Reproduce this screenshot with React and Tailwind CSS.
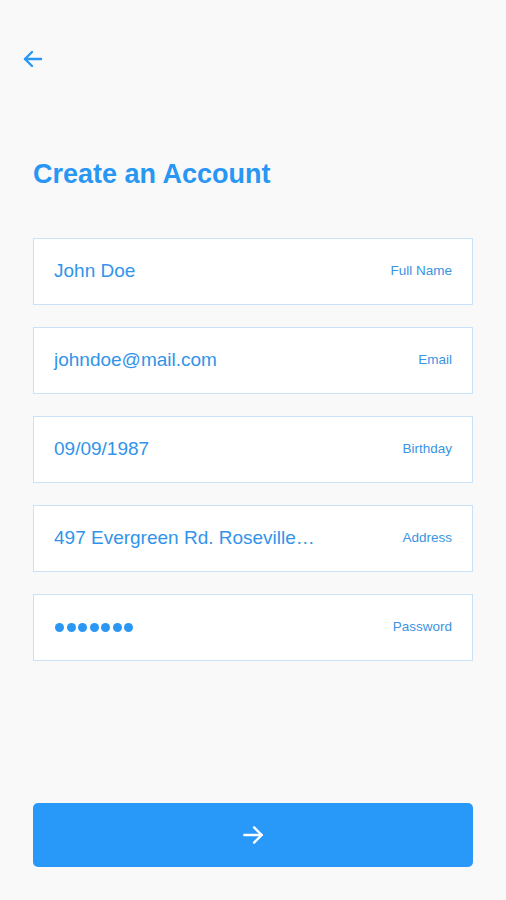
import React from "react";

const fields = [
  { value: "John Doe", label: "Full Name" },
  { value: "johndoe@mail.com", label: "Email" },
  { value: "09/09/1987", label: "Birthday" },
  { value: "497 Evergreen Rd. Roseville…", label: "Address" },
  { value: "dots", label: "Password" },
];

export default function App() {
  return (
    <div className="w-[506px] h-[900px] bg-[#f9f9f9] flex flex-col px-[33px] font-['Liberation_Sans',Arial,sans-serif]">
      <div className="pt-[47px] -ml-[12px]">
        <svg width="24" height="24" viewBox="0 0 24 24" fill="none" stroke="#2997f3" strokeWidth="2.4" strokeLinecap="round" strokeLinejoin="round">
          <path d="M20 12H4" />
          <path d="M11 5l-7 7 7 7" />
        </svg>
      </div>
      <h1 className="mt-[88px] text-[27px] leading-[31px] font-bold text-[#2897f3]">Create an Account</h1>
      <div className="mt-[48px] flex flex-col gap-[22px]">
        {fields.map((f) => (
          <div key={f.label} className="h-[67px] bg-white border border-[#c9e2f8] flex items-center justify-between pl-[20px] pr-[20px]">
            {f.value === "dots" ? (
              <div className="flex gap-[2.5px] pl-[1px]">
                {Array.from({ length: 7 }).map((_, i) => (
                  <span key={i} className="w-[9px] h-[9px] rounded-full bg-[#2997f3]" />
                ))}
              </div>
            ) : (
              <span className="text-[19px] text-[#3194ea]">{f.value}</span>
            )}
            <span className="text-[13.5px] text-[#3a94e3]">{f.label}</span>
          </div>
        ))}
      </div>
      <div className="flex-1" />
      <button className="mb-[33px] h-[64px] w-full rounded-[5px] bg-[#2899f9] flex items-center justify-center">
        <svg width="26" height="26" viewBox="0 0 24 24" fill="none" stroke="#ffffff" strokeWidth="2.2" strokeLinecap="round" strokeLinejoin="round">
          <path d="M4 12h16" />
          <path d="M13 5l7 7-7 7" />
        </svg>
      </button>
    </div>
  );
}
